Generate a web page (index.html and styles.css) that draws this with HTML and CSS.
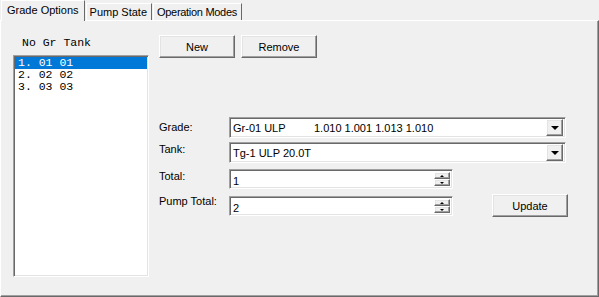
FILE: index.html
```html
<!DOCTYPE html>
<html lang="en">
<head>
    <meta charset="UTF-8">
    <title>Grade Options</title>
    <link rel="stylesheet" href="styles.css">
</head>
<body>
    <div class="window">
        <!-- Tab strip -->
        <div class="tabs">
            <div class="tab active">Grade Options</div>
            <div class="tab">Pump State</div>
            <div class="tab tab-wide">Operation Modes</div>
        </div>

        <div class="panel">
            <!-- Grade list -->
            <div class="grade-list">
                <div class="list-head">No Gr Tank</div>
                <ul class="listbox">
                    <li class="selected">1. 01 01</li>
                    <li>2. 02 02</li>
                    <li>3. 03 03</li>
                </ul>
            </div>

            <!-- Editor -->
            <div class="editor">
                <div class="actions">
                    <button class="btn">New</button>
                    <button class="btn">Remove</button>
                </div>

                <div class="fields">
                    <div class="row row-grade">
                        <label class="field-label">Grade:</label>
                        <div class="combo">
                            <span class="combo-text"><span class="combo-main">Gr-01 ULP</span>1.010 1.001 1.013 1.010</span>
                            <span class="drop-btn"><span class="arrow-down"></span></span>
                        </div>
                    </div>
                    <div class="row row-tank">
                        <label class="field-label">Tank:</label>
                        <div class="combo">
                            <span class="combo-text">Tg-1 ULP 20.0T</span>
                            <span class="drop-btn"><span class="arrow-down"></span></span>
                        </div>
                    </div>
                    <div class="row row-total">
                        <label class="field-label">Total:</label>
                        <div class="spin">
                            <span class="spin-text">1</span>
                            <span class="spin-btns">
                                <span class="spin-btn"><span class="tiny-up"></span></span>
                                <span class="spin-btn"><span class="tiny-down"></span></span>
                            </span>
                        </div>
                    </div>
                    <div class="row row-pump">
                        <label class="field-label">Pump Total:</label>
                        <div class="spin">
                            <span class="spin-text">2</span>
                            <span class="spin-btns">
                                <span class="spin-btn"><span class="tiny-up"></span></span>
                                <span class="spin-btn"><span class="tiny-down"></span></span>
                            </span>
                        </div>
                        <button class="btn btn-update">Update</button>
                    </div>
                </div>
            </div>
        </div>
    </div>
</body>
</html>
```

FILE: styles.css
```css
* {
    margin: 0;
    padding: 0;
    box-sizing: border-box;
}

body {
    font-family: "Liberation Sans", Arial, sans-serif;
    font-size: 11px;
    color: #000;
    background: #f0f0f0;
    width: 599px;
    height: 297px;
    overflow: hidden;
}

/* Tab strip */
.tabs {
    display: flex;
    align-items: flex-end;
    height: 20px;
    padding-left: 1px;
}

.tab {
    height: 17px;
    line-height: 16px;
    padding: 0 4px 0 3px;
    border: 1px solid #fff;
    border-bottom: none;
    border-right-color: #696969;
    background: #f0f0f0;
    white-space: nowrap;
}

.tab + .tab {
    margin-left: 1px;
}

.tab-wide {
    letter-spacing: -0.3px;
}

.tab.active {
    position: relative;
    z-index: 2;
    height: 21px;
    line-height: 18px;
    margin-bottom: -1px;
    padding: 0 5px 0 5px;
}

/* Page panel */
.panel {
    display: flex;
    height: 277px;
    padding: 14px 0 0 12px;
    border: 1px solid #fff;
    border-right-color: #696969;
    border-bottom-color: #696969;
    box-shadow: inset -1px -1px #a0a0a0;
}

/* Sunken 3D edge shared by list and inputs */
.listbox,
.combo,
.spin {
    background: #fff;
    border: 1px solid;
    border-color: #a0a0a0 #fff #fff #a0a0a0;
    box-shadow: inset 1px 1px #696969, inset -1px -1px #e3e3e3;
}

/* Grade list */
.grade-list {
    width: 136px;
}

.list-head {
    font-family: "Liberation Mono", monospace;
    font-size: 11.5px;
    line-height: 14px;
    margin-top: 1px;
    padding-left: 9px;
    margin-bottom: 5px;
}

.listbox {
    list-style: none;
    height: 222px;
    padding: 1px 1px;
    font-family: "Liberation Mono", monospace;
    font-size: 11.5px;
}

.listbox li {
    line-height: 12px;
    padding-left: 3px;
    white-space: pre;
}

.listbox li.selected {
    background: #0078d7;
    color: #fff;
}

/* Editor column */
.editor {
    margin-left: 10px;
}

.actions {
    display: flex;
    gap: 6px;
}

.btn {
    font-family: "Liberation Sans", Arial, sans-serif;
    font-size: 11px;
    color: #000;
    width: 76px;
    height: 23px;
    background: #f0f0f0;
    border: 1px solid;
    border-color: #fff #696969 #696969 #fff;
    box-shadow: inset -1px -1px #a0a0a0, inset 1px 1px #e3e3e3;
}

.fields {
    margin-top: 59px;
}

.row {
    display: flex;
    align-items: flex-start;
}

.row-tank {
    margin-top: 4px;
}

.row-total {
    margin-top: 6px;
}

.row-pump {
    margin-top: 7px;
}

.field-label {
    width: 70px;
    line-height: 14px;
}

.row-grade .field-label {
    padding-top: 3px;
}

.row-pump .field-label {
    margin-top: -2px;
}

/* Combo boxes */
.combo {
    display: flex;
    align-items: center;
    width: 337px;
    height: 21px;
    padding: 2px 2px 2px 3px;
}

.combo-text {
    flex: 1;
    white-space: nowrap;
}

.combo-main {
    display: inline-block;
    width: 81px;
}

.drop-btn,
.spin-btn {
    display: flex;
    align-items: center;
    justify-content: center;
    background: #f0f0f0;
    border: 1px solid;
    border-color: #fff #696969 #696969 #fff;
    box-shadow: inset -1px -1px #a0a0a0, inset 1px 1px #e3e3e3;
}

.drop-btn {
    width: 17px;
    height: 17px;
}

.arrow-down {
    width: 0;
    height: 0;
    border-left: 4px solid transparent;
    border-right: 4px solid transparent;
    border-top: 4px solid #000;
}

/* Spin boxes */
.spin {
    display: flex;
    align-items: stretch;
    width: 224px;
    height: 20px;
    padding: 2px 2px 2px 3px;
}

.spin-text {
    flex: 1;
    line-height: 17px;
    padding-top: 1px;
}

.spin-btns {
    display: flex;
    flex-direction: column;
    width: 16px;
}

.spin-btn {
    flex: 1;
}

.tiny-up,
.tiny-down {
    width: 0;
    height: 0;
    border-left: 2px solid transparent;
    border-right: 2px solid transparent;
}

.tiny-up {
    border-bottom: 2px solid #000;
}

.tiny-down {
    border-top: 2px solid #000;
}

.btn-update {
    margin-left: 39px;
    margin-top: -2px;
}
```
